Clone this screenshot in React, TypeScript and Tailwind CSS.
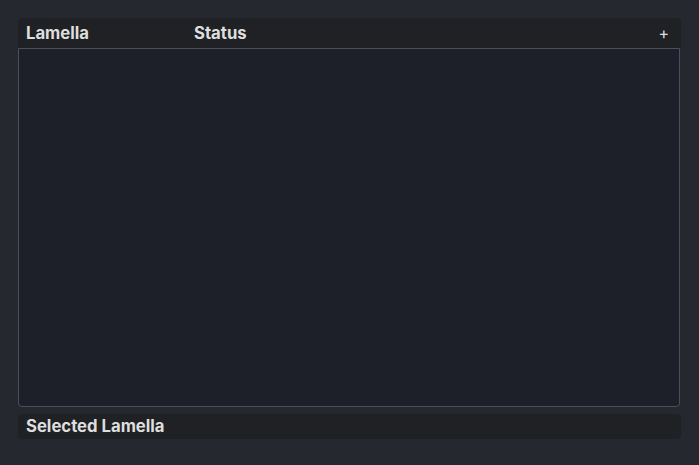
import React from 'react';

const App: React.FC = () => {
    return (
        <div className="w-[699px] h-[465px] bg-[#262830] p-[18px] pb-[26px] flex flex-col font-['Inter',sans-serif] text-[#dedede]">
            <div className="h-[30px] bg-[#1f2125] rounded-t-sm flex items-center pl-2 pr-3 pt-[2px] font-bold text-[16.7px]">
                <span className="w-[168px]">Lamella</span>
                <span className="flex-1">Status</span>
                <span className="text-base font-normal leading-none -mt-[3px]">+</span>
            </div>
            <div className="flex-1 bg-[#1e2029] border border-[#4b4e5c] rounded-b-sm mr-px" />
            <div className="mt-[7px] h-[25px] bg-[#1f2125] rounded-sm flex items-center px-2 font-bold text-[16.7px]">
                Selected Lamella
            </div>
        </div>
    );
};

export default App;
